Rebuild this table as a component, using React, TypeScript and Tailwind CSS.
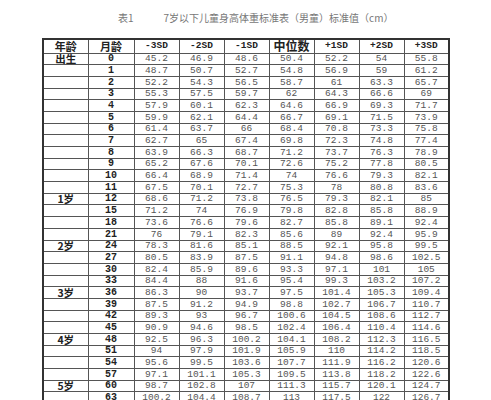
const rows: [string, string, string[]][] = [
  ["出生", "0", ["45.2", "46.9", "48.6", "50.4", "52.2", "54", "55.8"]],
  ["", "1", ["48.7", "50.7", "52.7", "54.8", "56.9", "59", "61.2"]],
  ["", "2", ["52.2", "54.3", "56.5", "58.7", "61", "63.3", "65.7"]],
  ["", "3", ["55.3", "57.5", "59.7", "62", "64.3", "66.6", "69"]],
  ["", "4", ["57.9", "60.1", "62.3", "64.6", "66.9", "69.3", "71.7"]],
  ["", "5", ["59.9", "62.1", "64.4", "66.7", "69.1", "71.5", "73.9"]],
  ["", "6", ["61.4", "63.7", "66", "68.4", "70.8", "73.3", "75.8"]],
  ["", "7", ["62.7", "65", "67.4", "69.8", "72.3", "74.8", "77.4"]],
  ["", "8", ["63.9", "66.3", "68.7", "71.2", "73.7", "76.3", "78.9"]],
  ["", "9", ["65.2", "67.6", "70.1", "72.6", "75.2", "77.8", "80.5"]],
  ["", "10", ["66.4", "68.9", "71.4", "74", "76.6", "79.3", "82.1"]],
  ["", "11", ["67.5", "70.1", "72.7", "75.3", "78", "80.8", "83.6"]],
  ["1岁", "12", ["68.6", "71.2", "73.8", "76.5", "79.3", "82.1", "85"]],
  ["", "15", ["71.2", "74", "76.9", "79.8", "82.8", "85.8", "88.9"]],
  ["", "18", ["73.6", "76.6", "79.6", "82.7", "85.8", "89.1", "92.4"]],
  ["", "21", ["76", "79.1", "82.3", "85.6", "89", "92.4", "95.9"]],
  ["2岁", "24", ["78.3", "81.6", "85.1", "88.5", "92.1", "95.8", "99.5"]],
  ["", "27", ["80.5", "83.9", "87.5", "91.1", "94.8", "98.6", "102.5"]],
  ["", "30", ["82.4", "85.9", "89.6", "93.3", "97.1", "101", "105"]],
  ["", "33", ["84.4", "88", "91.6", "95.4", "99.3", "103.2", "107.2"]],
  ["3岁", "36", ["86.3", "90", "93.7", "97.5", "101.4", "105.3", "109.4"]],
  ["", "39", ["87.5", "91.2", "94.9", "98.8", "102.7", "106.7", "110.7"]],
  ["", "42", ["89.3", "93", "96.7", "100.6", "104.5", "108.6", "112.7"]],
  ["", "45", ["90.9", "94.6", "98.5", "102.4", "106.4", "110.4", "114.6"]],
  ["4岁", "48", ["92.5", "96.3", "100.2", "104.1", "108.2", "112.3", "116.5"]],
  ["", "51", ["94", "97.9", "101.9", "105.9", "110", "114.2", "118.5"]],
  ["", "54", ["95.6", "99.5", "103.6", "107.7", "111.9", "116.2", "120.6"]],
  ["", "57", ["97.1", "101.1", "105.3", "109.5", "113.8", "118.2", "122.6"]],
  ["5岁", "60", ["98.7", "102.8", "107", "111.3", "115.7", "120.1", "124.7"]],
  ["", "63", ["100.2", "104.4", "108.7", "113", "117.5", "122", "126.7"]],
]

const sdHeads = ["-3SD", "-2SD", "-1SD", "中位数", "+1SD", "+2SD", "+3SD"]

const cjk = "font-['Noto_Sans_CJK_SC',sans-serif]"
const mono = "font-['Liberation_Mono','Noto_Sans_CJK_SC',monospace]"

export default function App() {
  return (
    <div className="w-[491px] h-[400px] overflow-hidden bg-white">
      {/* Title */}
      <div className={`flex h-[38px] items-start pt-[10px] text-[10px] text-[#777] ${cjk}`}>
        <span className="ml-[118px]">表1</span>
        <span className="ml-[30px]">7岁以下儿童身高体重标准表（男童）标准值（cm）</span>
      </div>

      {/* Table */}
      <table className="ml-[42px] border-collapse border-2 border-[#333] table-fixed w-[406px]">
        <thead>
          <tr className="h-[14px]">
            <th className={`w-[45px] border border-[#555] p-0 text-[11px] leading-[12px] font-bold text-[#222] ${cjk}`}>年龄</th>
            <th className={`w-[46px] border border-[#555] p-0 text-[11px] leading-[12px] font-bold text-[#222] ${cjk}`}>月龄</th>
            {sdHeads.map((h) =>
              h === "中位数" ? (
                <th key={h} className={`w-[45px] border border-[#555] p-0 text-[12px] leading-[12px] font-bold text-[#222] ${cjk}`}>
                  {h}
                </th>
              ) : (
                <th key={h} className={`w-[45px] border border-[#555] p-0 text-[9.5px] leading-[12px] font-bold text-[#222] ${mono}`}>
                  {h}
                </th>
              )
            )}
          </tr>
        </thead>
        <tbody>
          {rows.map(([age, month, vals]) => (
            <tr key={month} className="h-[11.7px]">
              <td className={`border border-[#555] p-0 text-center align-bottom text-[10.5px] leading-[10px] font-bold text-[#222] ${cjk}`}>{age}</td>
              <td className={`border border-[#555] p-0 text-center align-bottom text-[10px] leading-[10px] font-bold text-[#222] ${mono}`}>{month}</td>
              {vals.map((v, i) => (
                <td key={i} className={`border border-[#555] p-0 text-center align-bottom text-[9.5px] leading-[10px] text-[#555] ${mono}`}>
                  {v}
                </td>
              ))}
            </tr>
          ))}
        </tbody>
      </table>
    </div>
  )
}
